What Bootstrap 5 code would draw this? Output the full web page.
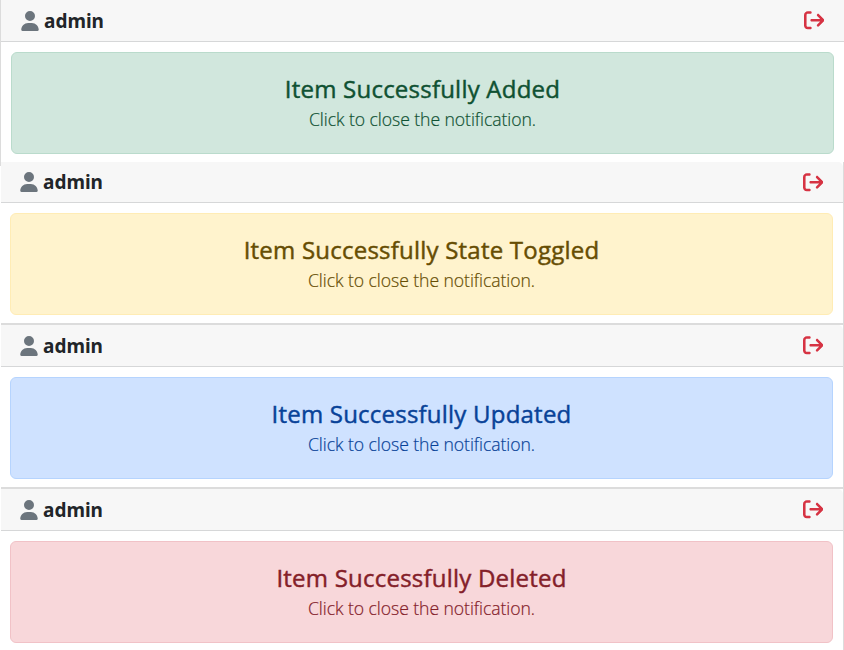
<!DOCTYPE html>
<html lang="en">
<head>
<meta charset="utf-8">
<meta name="viewport" content="width=device-width, initial-scale=1">
<title>Notifications</title>
<link href="https://cdn.jsdelivr.net/npm/bootstrap@5.3.0/dist/css/bootstrap.min.css" rel="stylesheet">
<style>
body{font-family:"Open Sans","Noto Sans",sans-serif;background:#fff;height:650px;overflow:hidden}
.panel{border:0 solid #dcdcdc;border-radius:0;height:164px}
.panel .card-header{height:42px;background:#f7f7f7;border-bottom:1px solid #d6d7d8;border-radius:0;padding:0 20px}
.panel-first{height:162px}
.panel-first::before{content:"";position:absolute;left:0;top:0;width:1px;height:166px;background:#dcdcdc}
.panel-first .card-header{height:42px;padding-left:21px}
.panel-second{height:161px;margin-left:1px;border-right-width:1px}
.panel-second .card-header{height:41px;border-top-right-radius:5px;padding-left:19px}
.panel-ruled{margin-left:1px;border-top-width:2px;border-right-width:1px}
.panel-ruled .card-header{border-top-right-radius:5px;padding-left:19px}
.user-name{font-family:"Noto Sans","Open Sans",sans-serif;font-size:19px;font-weight:700;color:#212529;margin-left:5px;line-height:24px}
.notice{height:102px;margin:10px 10px 0 9px;padding:21px 0 0;border-radius:6px}
.panel-first .notice{margin:10px 10px 0 11px}
.notice-title{font-size:24px;font-weight:500;line-height:29px;margin:0;letter-spacing:.22px;-webkit-text-stroke:.45px currentColor}
.notice-text{font-size:17.6px;font-weight:300;line-height:26px;margin:1px 0 0;padding-top:2px;letter-spacing:-.06px;-webkit-text-stroke:.2px currentColor}
.tone-green{background:#d1e7dd;border-color:#badbcc;color:#0f5132}
.tone-yellow{background:#fff3cd;border-color:#ffecb5;color:#664d03}
.tone-blue{background:#cfe2ff;border-color:#b6d4fe;color:#084298}
.tone-red{background:#f8d7da;border-color:#f1c2c7;color:#842029}
.icon-user{fill:#6c757d}
.icon-exit{fill:#d63343}
</style>
</head>
<body>
<svg class="d-none" aria-hidden="true">
<symbol id="user" viewBox="0 0 448 512"><path d="M224 256A128 128 0 1 0 224 0a128 128 0 1 0 0 256zm-45.7 48C79.8 304 0 383.8 0 482.3C0 498.7 13.3 512 29.7 512H418.3c16.4 0 29.7-13.3 29.7-29.7C448 383.8 368.2 304 269.7 304H178.3z"/></symbol>
<symbol id="exit" viewBox="0 0 512 512"><path d="M502.6 278.6c12.5-12.5 12.5-32.8 0-45.3l-128-128c-12.5-12.5-32.8-12.5-45.3 0s-12.5 32.8 0 45.3L402.7 224 192 224c-17.7 0-32 14.3-32 32s14.3 32 32 32l210.7 0-73.4 73.4c-12.5 12.5-12.5 32.8 0 45.3s32.8 12.5 45.3 0l128-128zM160 96c17.7 0 32-14.3 32-32s-14.3-32-32-32L96 32C43 32 0 75 0 128L0 384c0 53 43 96 96 96l64 0c17.7 0 32-14.3 32-32s-14.3-32-32-32l-64 0c-17.7 0-32-14.3-32-32l0-256c0-17.7 14.3-32 32-32l64 0z"/></symbol>
</svg>
<section class="card panel panel-first">
  <div class="card-header d-flex align-items-center justify-content-between">
    <div class="d-flex align-items-center"><svg class="icon-user" width="18" height="20"><use href="#user"/></svg><span class="user-name">admin</span></div>
    <svg class="icon-exit" width="20.5" height="20.5"><use href="#exit"/></svg>
  </div>
  <div class="alert notice tone-green text-center"><h4 class="notice-title">Item Successfully Added</h4><p class="notice-text">Click to close the notification.</p></div>
</section>
<section class="card panel panel-second">
  <div class="card-header d-flex align-items-center justify-content-between">
    <div class="d-flex align-items-center"><svg class="icon-user" width="18" height="20"><use href="#user"/></svg><span class="user-name">admin</span></div>
    <svg class="icon-exit" width="20.5" height="20.5"><use href="#exit"/></svg>
  </div>
  <div class="alert notice tone-yellow text-center"><h4 class="notice-title">Item Successfully State Toggled</h4><p class="notice-text">Click to close the notification.</p></div>
</section>
<section class="card panel panel-ruled">
  <div class="card-header d-flex align-items-center justify-content-between">
    <div class="d-flex align-items-center"><svg class="icon-user" width="18" height="20"><use href="#user"/></svg><span class="user-name">admin</span></div>
    <svg class="icon-exit" width="20.5" height="20.5"><use href="#exit"/></svg>
  </div>
  <div class="alert notice tone-blue text-center"><h4 class="notice-title">Item Successfully Updated</h4><p class="notice-text">Click to close the notification.</p></div>
</section>
<section class="card panel panel-ruled">
  <div class="card-header d-flex align-items-center justify-content-between">
    <div class="d-flex align-items-center"><svg class="icon-user" width="18" height="20"><use href="#user"/></svg><span class="user-name">admin</span></div>
    <svg class="icon-exit" width="20.5" height="20.5"><use href="#exit"/></svg>
  </div>
  <div class="alert notice tone-red text-center"><h4 class="notice-title">Item Successfully Deleted</h4><p class="notice-text">Click to close the notification.</p></div>
</section>
<script src="https://cdn.jsdelivr.net/npm/bootstrap@5.3.0/dist/js/bootstrap.bundle.min.js"></script>
</body>
</html>
